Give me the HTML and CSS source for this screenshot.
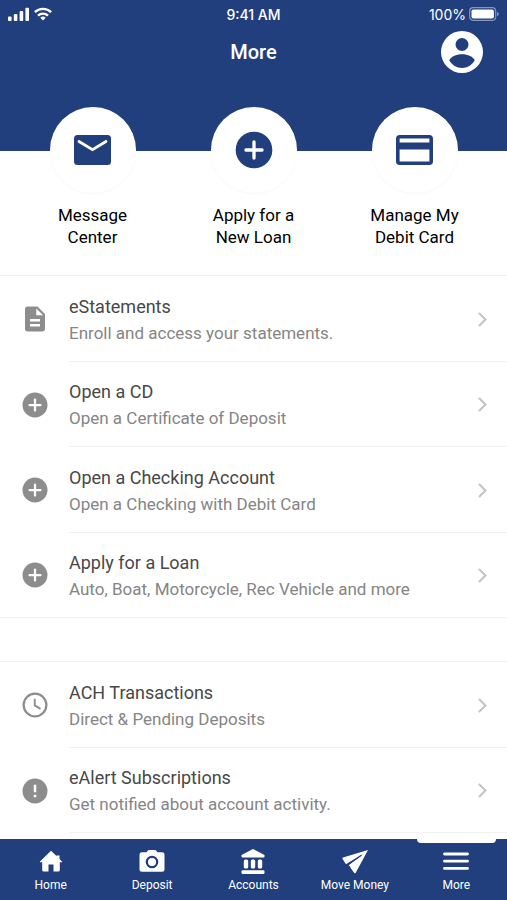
FILE: index.html
```html
<!DOCTYPE html>
<html lang="en">
<head>
<meta charset="utf-8">
<meta name="viewport" content="width=device-width, initial-scale=1">
<title>More</title>
<link rel="stylesheet" href="styles.css">
</head>
<body>
<svg class="symbols" aria-hidden="true">
  <symbol id="plus" viewBox="0 0 24 24"><circle cx="12" cy="12" r="10" fill="currentColor"/><path d="M12 7.6v8.8M7.6 12h8.8" stroke="#fff" stroke-width="1.8" stroke-linecap="round"/></symbol>
  <symbol id="chevron" viewBox="0 0 24 24"><path d="M8.6 5.8l6.2 6.2-6.2 6.2" fill="none" stroke="currentColor" stroke-width="2"/></symbol>
</svg>
<div class="app">
  <header class="header">
    <div class="status">
      <div class="signal">
        <svg width="22" height="14" viewBox="0 0 22 14" fill="#fff"><rect x="0" y="9.500" width="3.600" height="4.500" rx="1"/><rect x="5.800" y="7" width="3.600" height="7" rx="1"/><rect x="11.600" y="4" width="3.600" height="10" rx="1"/><rect x="17.400" y="0.800" width="3.600" height="13.200" rx="1"/></svg>
        <svg width="18" height="14" viewBox="0 0 18 14" fill="none" stroke="#fff" stroke-width="2.400"><path d="M.9 5.200a11.600 11.600 0 0 1 16.200 0M4 8.600a7.200 7.200 0 0 1 10 0"/><path d="M9 13.400L6.300 10.800a3.900 3.900 0 0 1 5.400 0z" fill="#fff" stroke="none"/></svg>
      </div>
      <span class="time">9:41 AM</span>
      <div class="battery">
        <span>100%</span>
        <svg width="30" height="14" viewBox="0 0 30 14"><rect x=".7" y=".7" width="26" height="12.600" rx="3.500" fill="none" stroke="#8496bb" stroke-width="1.200"/><rect x="2.500" y="2.500" width="22.400" height="9" rx="1.800" fill="#fff"/><path d="M28 4.700q1.800.8 1.800 2.300t-1.800 2.300z" fill="#8496bb"/></svg>
      </div>
    </div>
    <div class="titlebar">
      <h1>More</h1>
      <button class="profile" aria-label="Profile"><svg width="42" height="42" viewBox="0 0 42 42"><circle cx="21" cy="21" r="21" fill="#fff"/><circle cx="21" cy="13.500" r="6.500" fill="#213f7d"/><path d="M8.300 29.500c1.400-3.700 6.700-6.200 12.700-6.200s11.300 2.500 12.700 6.200c-2.700 4.500-7.300 7.500-12.700 7.500s-10-3-12.700-7.500z" fill="#213f7d"/></svg></button>
    </div>
  </header>
  <main class="content">
    <nav class="shortcuts" aria-label="Shortcuts">
      <a href="#messages" class="shortcut"><span class="disc"><svg width="37" height="30" viewBox="0 0 37 30"><rect width="37" height="30" rx="3.500" fill="currentColor"/><path d="M5 6.500l13.500 8.200L32 6.500" fill="none" stroke="#fff" stroke-width="2.800" stroke-linecap="round"/></svg></span><span>Message<br>Center</span></a>
      <a href="#loan" class="shortcut"><span class="disc"><svg width="44" height="44"><use href="#plus"/></svg></span><span>Apply for a<br>New Loan</span></a>
      <a href="#card" class="shortcut"><span class="disc"><svg width="37" height="30" viewBox="0 0 37 30"><rect x="1.800" y="1.800" width="33.400" height="26.400" rx="2" fill="none" stroke="currentColor" stroke-width="3.600"/><path d="M2 7.600h33v7H2z" fill="currentColor"/></svg></span><span>Manage My<br>Debit Card</span></a>
    </nav>
    <ul class="list">
      <li><a href="#estatements" class="row"><svg class="icon" viewBox="0 0 24 24"><path fill="currentColor" fill-rule="evenodd" d="M14 2H6c-1.100 0-2 .9-2 2v16c0 1.100.9 2 2 2h12c1.100 0 2-.9 2-2V8l-6-6zm2 16H8v-2h8v2zm0-4H8v-2h8v2zm-3-5V3.500L18.500 9H13z"/></svg><span class="text"><span class="name">eStatements</span><span class="note">Enroll and access your statements.</span></span><svg class="chevron"><use href="#chevron"/></svg></a></li>
      <li><a href="#cd" class="row"><svg class="icon"><use href="#plus"/></svg><span class="text"><span class="name">Open a CD</span><span class="note">Open a Certificate of Deposit</span></span><svg class="chevron"><use href="#chevron"/></svg></a></li>
      <li><a href="#checking" class="row"><svg class="icon"><use href="#plus"/></svg><span class="text"><span class="name">Open a Checking Account</span><span class="note">Open a Checking with Debit Card</span></span><svg class="chevron"><use href="#chevron"/></svg></a></li>
      <li><a href="#apply" class="row"><svg class="icon"><use href="#plus"/></svg><span class="text"><span class="name">Apply for a Loan</span><span class="note">Auto, Boat, Motorcycle, Rec Vehicle and more</span></span><svg class="chevron"><use href="#chevron"/></svg></a></li>
    </ul>
    <ul class="list">
      <li><a href="#ach" class="row"><svg class="icon" viewBox="0 0 24 24" fill="none" stroke="currentColor"><circle cx="12" cy="12" r="9.100" stroke-width="1.800"/><path d="M11.800 7v5.300l4.600 2.800" stroke-width="1.500"/></svg><span class="text"><span class="name">ACH Transactions</span><span class="note">Direct &amp; Pending Deposits</span></span><svg class="chevron"><use href="#chevron"/></svg></a></li>
      <li><a href="#ealerts" class="row"><svg class="icon" viewBox="0 0 24 24"><circle cx="12" cy="12" r="10" fill="currentColor"/><path d="M11 7h2v6h-2zM11 15h2v2h-2z" fill="#fff"/></svg><span class="text"><span class="name">eAlert Subscriptions</span><span class="note">Get notified about account activity.</span></span><svg class="chevron"><use href="#chevron"/></svg></a></li>
    </ul>
  </main>
  <nav class="tabs" aria-label="Main">
    <a href="#home"><svg viewBox="0 0 28 28"><path d="M14 2.800L3 13.600q-.4.600.4.600H5.200V22q0 1.500 1.500 1.500H11.500v-7h5v7h4.800q1.500 0 1.500-1.500v-7.800h1.800q.8 0 .4-.6L22.500 11V7.500h-3v.6z"/></svg><span>Home</span></a>
    <a href="#deposit"><svg viewBox="0 0 28 28"><path fill-rule="evenodd" d="M10.500 2h7l2 2.300H24q2.500 0 2.500 2.500v14.400q0 2.500-2.500 2.500H4q-2.500 0-2.500-2.500V6.800q0-2.500 2.500-2.500h4.500zM14 7.700a6.300 6.300 0 1 0 0 12.600 6.300 6.300 0 0 0 0-12.600z"/><circle cx="14" cy="14" r="4"/></svg><span>Deposit</span></a>
    <a href="#accounts"><svg viewBox="0 0 28 28"><path d="M14 1L2.500 7v1.500q0 1 1 1h21q1 0 1-1V7z"/><rect x="4.800" y="11.500" width="4.400" height="9" rx="1.500"/><rect x="11.800" y="11.500" width="4.400" height="9" rx="1.500"/><rect x="18.800" y="11.500" width="4.400" height="9" rx="1.500"/><rect x="2.500" y="22.300" width="23" height="3.700" rx="1.300"/></svg><span>Accounts</span></a>
    <a href="#move"><svg viewBox="0 0 28 28"><path d="M27 2L2 9.600q-.9.400-.5 1.200L4.400 15.600q.5.700 1.300.2L22.500 5.600 7.600 17.200l1.300 1L10 20.500 13.300 25q.7.700 1.300-.1z"/><path d="M6.800 16.900L20.500 7.200" stroke="#213f7d" stroke-width="1.100"/></svg><span>Move Money</span></a>
    <a href="#more" aria-current="page"><svg viewBox="0 0 28 28" fill="none" stroke="#fff" stroke-width="2.800" stroke-linecap="round"><path d="M2.500 6h23M2.500 13.200h23M2.500 20.400h23"/></svg><span>More</span></a>
  </nav>
</div>
</body>
</html>
```
FILE: styles.css
```css
* { box-sizing: border-box; }
body { margin: 0; background: #fff; color: #000; font-family: Roboto, "Liberation Sans", sans-serif; }
a { color: inherit; text-decoration: none; }
svg { display: block; flex: none; }
.symbols { position: absolute; width: 0; height: 0; }
.app { display: flex; flex-direction: column; min-height: 100vh; }

.header { height: 151px; background: #213f7d; color: #fff; }
.status { display: grid; grid-template-columns: 1fr auto 1fr; align-items: center; height: 28px; padding: 0 8px; font-family: Inter, sans-serif; font-size: 14px; }
.signal { display: flex; gap: 4px; }
.time { font-weight: 500; }
.battery { display: flex; align-items: center; justify-content: flex-end; gap: 3px; }
.titlebar { display: grid; grid-template-columns: 1fr auto 1fr; align-items: center; height: 48px; padding: 0 24px; }
.titlebar h1 { grid-column: 2; margin: 0; font-size: 20px; font-weight: 500; }
.profile { justify-self: end; padding: 0; border: 0; border-radius: 50%; background: none; }

.content { flex: 1; }
.shortcuts { display: grid; grid-template-columns: repeat(3, 1fr); margin-top: -44px; padding: 0 12px 27px; }
.shortcut { display: flex; flex-direction: column; align-items: center; gap: 11px; font-size: 17px; line-height: 22px; text-align: center; }
.disc { display: grid; place-items: center; width: 86px; height: 86px; border-radius: 50%; background: #fff; color: #213f7d; box-shadow: 0 1px 3px rgba(0, 0, 0, 0.03); }

.list { margin: 0; padding: 0; list-style: none; border-top: 1px solid #f2f2f2; }
.list + .list { margin-top: 43px; }
.row { position: relative; display: flex; align-items: center; height: 86px; padding-left: 20px; }
.list li:nth-child(even) .row { height: 85px; }
.icon { width: 30px; height: 30px; color: #8d8d8d; }
.text { display: flex; flex: 1; flex-direction: column; justify-content: center; height: 100%; margin-left: 19px; padding-top: 2px; border-bottom: 1px solid #f2f2f2; font-size: 17px; line-height: 26px; }
.list:first-of-type li:last-child .row { border-bottom: 1px solid #f2f2f2; }
.list:first-of-type li:last-child .text { border-bottom: 0; }
.name { color: #484848; font-size: 18px; }
.note { color: #858585; }
.chevron { position: absolute; right: 12px; width: 25px; height: 25px; color: #c4c4c4; }

.tabs { position: sticky; bottom: 0; display: grid; grid-template-columns: repeat(5, 1fr); height: 61px; background: #213f7d; color: #fff; font-size: 12px; line-height: 16px; }
.tabs a { position: relative; display: flex; flex-direction: column; align-items: center; padding-top: 9px; gap: 1px; }
.tabs svg { width: 28px; height: 28px; fill: #fff; }
.tabs a[aria-current] svg { fill: none; }
.tabs a[aria-current]::before { content: ""; position: absolute; top: 0; left: 11px; right: 11px; height: 4px; border-radius: 0 0 4px 4px; background: #fff; }
```
